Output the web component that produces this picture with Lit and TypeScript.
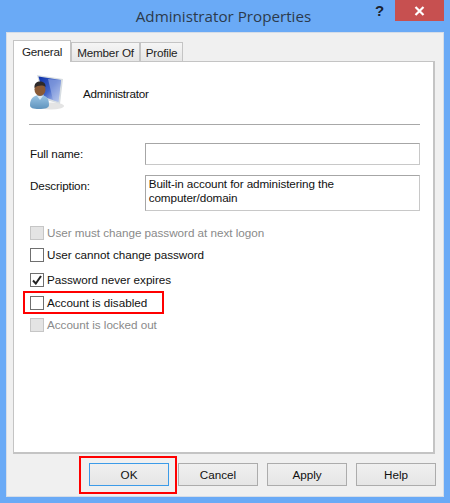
import { css, html, LitElement } from 'lit'
import { customElement } from 'lit/decorators.js'

const checks = [
  { label: 'User must change password at next logon', disabled: true, checked: false, row: '' },
  { label: 'User cannot change password', disabled: false, checked: false, row: '' },
  { label: 'Password never expires', disabled: false, checked: true, row: 'after-wide' },
  { label: 'Account is disabled', disabled: false, checked: false, row: 'after-mid' },
  { label: 'Account is locked out', disabled: true, checked: false, row: '' },
]

@customElement('app-root')
export class AppRoot extends LitElement {
  static styles = css`
    :host {
      display: block;
      width: 450px;
      height: 503px;
      overflow: hidden;
      position: relative;
      box-sizing: border-box;
      background: #6aaaf6;
      font-family: 'Liberation Sans', Arial, sans-serif;
      font-size: 11.7px;
      color: #111;
    }
    .titlebar {
      height: 32px;
      display: flex;
      align-items: center;
      justify-content: center;
      position: relative;
      padding-right: 3px;
      font-family: 'Open Sans', 'Noto Sans', sans-serif;
      font-size: 15.2px;
      color: #2c3a4c;
    }
    .help {
      position: absolute;
      left: 375px;
      top: 2px;
      font: bold 15px 'Liberation Sans', sans-serif;
      color: #1a2230;
    }
    .close {
      position: absolute;
      left: 395px;
      top: 0;
      width: 49px;
      height: 21px;
      background: #c75050;
      display: flex;
      align-items: center;
      justify-content: center;
    }
    .client {
      margin: 0 6px 0 6px;
      height: 465px;
      box-sizing: border-box;
      background: #f0f0f0;
      padding: 7px 8px 10px 6px;
      display: flex;
      flex-direction: column;
      border: 1px solid #d5dde8;
    }
    .tabs {
      display: flex;
      align-items: flex-end;
      height: 21px;
      position: relative;
      z-index: 1;
      letter-spacing: -0.2px;
    }
    .tab {
      box-sizing: border-box;
      height: 19px;
      padding-top: 3px;
      text-align: center;
      border: 1px solid #c4c4c4;
      border-bottom: none;
      background: linear-gradient(#f5f5f5, #e6e6e6);
      color: #222;
    }
    .tab.active {
      height: 22px;
      background: #fff;
      margin-bottom: -1px;
      padding-top: 4px;
    }
    .panel {
      box-sizing: border-box;
      width: 422px;
      height: 395px;
      background: #fff;
      border: 1px solid #c4c4c4;
      border-width: 1px 2px 2px 1px;
      padding: 14px 13px 0 15px;
    }
    .head {
      display: flex;
      align-items: center;
      gap: 18px;
      height: 34px;
      padding-bottom: 14px;
      border-bottom: 1px solid #a8a8a8;
    }
    .head svg {
      display: block;
    }
    .head span {
      letter-spacing: -0.25px;
    }
    .field {
      display: flex;
      margin-top: 10px;
      padding-left: 1px;
    }
    .field.first {
      margin-top: 18px;
    }
    .field label {
      width: 115px;
      padding-top: 4px;
      letter-spacing: -0.15px;
    }
    .input {
      box-sizing: border-box;
      width: 276px;
      height: 22px;
      border: 1px solid #b4b4b4;
      border-color: #a6a6a6 #c8c8c8 #c8c8c8 #a6a6a6;
      padding: 1px 3px;
      line-height: 14px;
      letter-spacing: -0.1px;
    }
    .input.tall {
      height: 36px;
    }
    .checks {
      display: flex;
      flex-direction: column;
      gap: 8px;
      margin-top: 15px;
      padding-left: 1px;
    }
    .check {
      display: flex;
      align-items: center;
      gap: 3px;
      height: 14px;
    }
    .check .text {
      margin-top: -2px;
      letter-spacing: -0.03px;
    }
    .check.after-wide {
      margin-top: 3px;
    }
    .check.after-mid {
      margin-top: 1px;
    }
    .box {
      box-sizing: border-box;
      width: 14px;
      height: 14px;
      border: 1px solid #6f6f6f;
      background: #fff;
      flex: none;
      display: flex;
      align-items: center;
      justify-content: center;
    }
    .check.off {
      color: #8a8a8a;
    }
    .check.off .box {
      background: #e4e4e4;
      border-color: #c6c6c6;
    }
    .buttons {
      display: flex;
      gap: 9px;
      margin: 9px 0 0 76px;
    }
    .btn {
      box-sizing: border-box;
      flex: none;
      width: 80px;
      height: 23px;
      border: 1px solid #acacac;
      background: linear-gradient(#f0f0f0, #e5e5e5);
      color: #111;
      font: inherit;
      padding: 0;
    }
    .btn.default {
      border-color: #3c9be8;
    }
    .mark {
      position: absolute;
      box-sizing: border-box;
      border: 2px solid #f00;
      pointer-events: none;
    }
    .mark.account {
      left: 23px;
      top: 291px;
      width: 141px;
      height: 23px;
    }
    .mark.ok {
      left: 79px;
      top: 456px;
      width: 98px;
      height: 38px;
    }
  `

  private icon() {
    return html`<svg width="36" height="36" viewBox="0 0 36 36">
      <defs>
        <linearGradient id="screen" x1="0" y1="0" x2="1" y2="1">
          <stop offset="0" stop-color="#0b2fa8"></stop>
          <stop offset="0.5" stop-color="#3f63c8"></stop>
          <stop offset="1" stop-color="#d5def4"></stop>
        </linearGradient>
        <linearGradient id="suit" x1="0" y1="0" x2="0" y2="1">
          <stop offset="0" stop-color="#9cc6e6"></stop>
          <stop offset="1" stop-color="#5f93bd"></stop>
        </linearGradient>
      </defs>
      <ellipse cx="22" cy="31" rx="13" ry="3.5" fill="#e4e4e4"></ellipse>
      <path d="M8 0 L34 4 L31 29 L14 24 Z" fill="#d7dde2"></path>
      <path d="M9.500 1.500 L32 5 L29.500 27 L15 22 Z" fill="url(#screen)"></path>
      <path d="M19 4 L32 5 L29.500 27 L24 25 Z" fill="#a9bcea" opacity="0.55"></path>
      <path d="M1 30 C1 23 5 21 9 20 L13 20 C18 21 20 24 20 30 C20 33 16 34 10 34 C4 34 1 33 1 30 Z" fill="url(#suit)"></path>
      <ellipse cx="11" cy="14.500" rx="5.500" ry="6.500" fill="#8a5a36"></ellipse>
      <path d="M5.500 13 C5 8 8 6.500 11 6.500 C14 6.500 17 8 16.500 12 C14 10 9 10 5.500 13 Z" fill="#2e2a2a"></path>
      <path d="M8 21 L11 25 L14 21 Z" fill="#d9e9f5"></path>
    </svg>`
  }

  render() {
    return html`
      <div class="titlebar">
        Administrator Properties
        <span class="help">?</span>
        <span class="close">
          <svg width="11" height="10" viewBox="0 0 11 10">
            <path d="M1.500 1 L9.500 9 M9.500 1 L1.500 9" stroke="#fff" stroke-width="2.200"></path>
          </svg>
        </span>
      </div>
      <div class="client">
        <div class="tabs">
          <div class="tab active" style="width:58px">General</div>
          <div class="tab" style="width:69px">Member Of</div>
          <div class="tab" style="width:43px">Profile</div>
        </div>
        <div class="panel">
          <div class="head">${this.icon()}<span>Administrator</span></div>
          <div class="field first">
            <label>Full name:</label>
            <div class="input"></div>
          </div>
          <div class="field">
            <label>Description:</label>
            <div class="input tall">Built-in account for administering the computer/domain</div>
          </div>
          <div class="checks">
            ${checks.map(
              (c) => html`<div class="check ${c.disabled ? 'off' : ''} ${c.row}">
                <span class="box">
                  ${c.checked
                    ? html`<svg width="10" height="10" viewBox="0 0 10 10">
                        <path d="M1 5.500 L3.800 8.500 L9 1" fill="none" stroke="#222" stroke-width="2"></path>
                      </svg>`
                    : ''}
                </span>
                <span class="text">${c.label}</span>
              </div>`
            )}
          </div>
        </div>
        <div class="buttons">
          <button class="btn default">OK</button>
          <button class="btn">Cancel</button>
          <button class="btn">Apply</button>
          <button class="btn">Help</button>
        </div>
      </div>
      <div class="mark account"></div>
      <div class="mark ok"></div>
    `
  }
}
